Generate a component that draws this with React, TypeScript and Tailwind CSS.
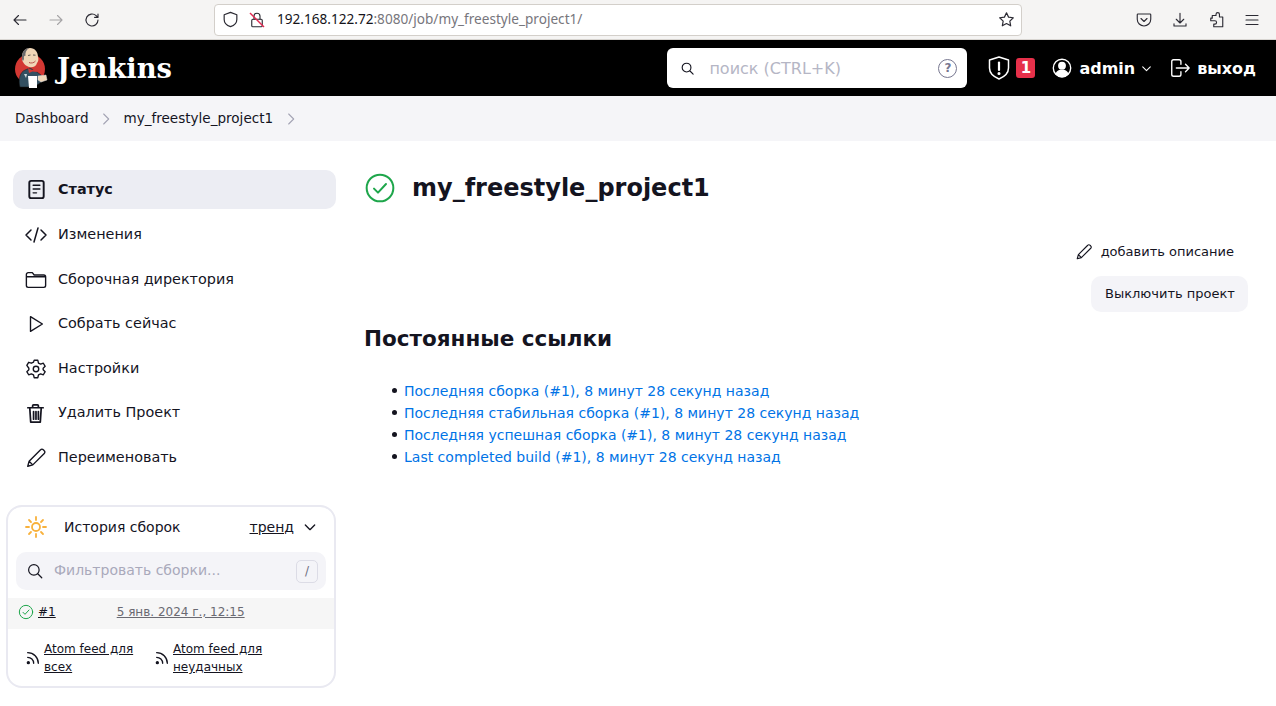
import React from "react";

const Stroke = ({ size = 20, sw = 1.5, className = "", children }: { size?: number; sw?: number; className?: string; children: React.ReactNode }) => (
  <svg width={size} height={size} viewBox="0 0 24 24" fill="none" stroke="currentColor" strokeWidth={sw} strokeLinecap="round" strokeLinejoin="round" className={className}>
    {children}
  </svg>
);

const Logo = () => (
  <svg width="40" height="48" viewBox="0 0 40 48">
    <circle cx="20" cy="25" r="15" fill="#d33833" />
    <path d="M10 43 C8 35 10 28 15 26 L20 24 L27 28 L31 31 L33 37 L27 41 L25 43 L12 43 Z" fill="#335061" stroke="#1b1b1b" strokeWidth=".5" />
    <path d="M12 13 C12 7 16 4 20 4 C25 4 28 8 28 13 C29 15 28 18 27 19 C26 23 22 24 19 23 C16 22 14 20 13 18 C12 17 12 15 12 13 Z" fill="#f0d6b7" />
    <path d="M12 13 C12 7 15 4.500 19 4 C16 6 15 9 15.500 12 C14.500 11.500 13.500 12 14 15 L13 17 C12 16 12 15 12 13 Z" fill="#6d6b6d" />
    <path d="M18 11.500 l2.500 -.5 M23 11 l2.500 .2" stroke="#3a3a3a" strokeWidth=".8" fill="none" />
    <path d="M19 18.500 C21 19.500 24 19 25.500 17" stroke="#a33" strokeWidth=".8" fill="none" />
    <path d="M18 24 L22 26 L26 24 L27 28 L22.500 27.500 L19 29 Z" fill="#d33833" />
    <path d="M18 32 L27 32 L27 44 L19 44 Z" fill="#fff" />
    <path d="M28 32 L36 31 L37 36 L31 38 L28 36 Z" fill="#f0d6b7" stroke="#ddd" strokeWidth=".5" />
    <path d="M14 30 L16 34 L17 30 Z" fill="#cfd8dc" />
  </svg>
);

const Row = ({ icon, label, active }: { icon: React.ReactNode; label: string; active?: boolean }) => (
  <div className={`flex items-center h-[39px] rounded-[10px] pl-[11px] text-[14.400px] ${active ? "bg-[#ecedf3] font-bold mb-[0.950px]" : ""}`}>
    <span className="w-[24px] h-[24px] flex items-center justify-center shrink-0">{icon}</span>
    <span className="ml-[10px]">{label}</span>
  </div>
);

const Rss = () => (
  <Stroke size={16} sw={2} className="shrink-0 text-[#14141f]">
    <path d="M4 11a9 9 0 0 1 9 9" />
    <path d="M4 4a16 16 0 0 1 16 16" />
    <circle cx="5" cy="19" r="1.500" fill="currentColor" />
  </Stroke>
);

const ChromeBtn = ({ children, className = "" }: { children: React.ReactNode; className?: string }) => (
  <span className={`flex items-center justify-center w-[20px] h-[20px] ${className}`}>{children}</span>
);

const links = [
  "Последняя сборка (#1), 8 минут 28 секунд назад",
  "Последняя стабильная сборка (#1), 8 минут 28 секунд назад",
  "Последняя успешная сборка (#1), 8 минут 28 секунд назад",
  "Last completed build (#1), 8 минут 28 секунд назад",
];

const Chevron = ({ className = "" }: { className?: string }) => (
  <Stroke size={16} sw={1.600} className={`text-[#a4a4b4] ${className}`}><path d="M8.500 4.500l7.500 7.500-7.500 7.500" /></Stroke>
);

export default function App() {
  return (
    <div className="w-[1276px] h-[706px] overflow-hidden bg-white text-[#14141f] text-[14px] font-['DejaVu_Sans',sans-serif]">
      {/* browser toolbar */}
      <div className="h-[40px] bg-[#f5f4f3] border-b border-[#d8d5d1] flex items-center text-[#2b2a33]">
        <div className="flex items-center gap-[16px] pl-[10px] w-[214px]">
          <ChromeBtn><Stroke size={18}><path d="M20 12H4M10 6l-6 6 6 6" /></Stroke></ChromeBtn>
          <ChromeBtn className="text-[#a5a4a6]"><Stroke size={18}><path d="M4 12h16M14 6l6 6-6 6" /></Stroke></ChromeBtn>
          <ChromeBtn><Stroke size={18}><path d="M20 12a8 8 0 1 1-2.500-5.800L20 8.500M20 4v4.500h-4.500" /></Stroke></ChromeBtn>
        </div>
        <div className="w-[808px] h-[32px] bg-white border border-[#d3cfca] rounded-[4px] flex items-center pl-[6px] pr-[5px] font-['Noto_Sans',sans-serif] text-[13.600px]">
          <Stroke size={19} className="text-[#2b2a33]"><path d="M12 3l8 3v6c0 4.500-3.200 7.500-8 9-4.800-1.500-8-4.500-8-9V6z" /></Stroke>
          <span className="relative ml-[8px] w-[18px] h-[18px]">
            <Stroke size={18}><rect x="5" y="11" width="14" height="10" rx="1.500" /><path d="M8 11V7a4 4 0 0 1 8 0v4" /></Stroke>
            <svg width="18" height="18" viewBox="0 0 18 18" className="absolute left-0 top-0"><path d="M2 2l14 14" stroke="#e22850" strokeWidth="1.500" /></svg>
          </span>
          <span className="ml-[11px] text-[#15141a]">192.168.122.72<span className="text-[#77767c]">:8080/job/my_freestyle_project1/</span></span>
          <span className="ml-auto flex">
            <Stroke size={19}><path d="M12 3.500l2.600 5.500 6 .8-4.400 4.200 1.100 6L12 17.100 6.700 20l1.100-6L3.400 9.800l6-.8z" /></Stroke>
          </span>
        </div>
        <div className="flex items-center ml-[112px] gap-[16px]">
          <ChromeBtn><Stroke size={18}><path d="M4 4h16a1 1 0 0 1 1 1v6a9 9 0 0 1-18 0V5a1 1 0 0 1 1-1z" /><path d="M8 10l4 4 4-4" /></Stroke></ChromeBtn>
          <ChromeBtn><Stroke size={18}><path d="M12 3v13M7 11l5 5 5-5M4 17v3h16v-3" /></Stroke></ChromeBtn>
          <ChromeBtn><Stroke size={18}><path d="M12 6V4.500a2.300 2.300 0 0 1 4.600 0V8H21v13H9v-3.500h1.500a2.200 2.200 0 0 0 0-4.500H5V9.500h2V6z" /></Stroke></ChromeBtn>
          <ChromeBtn><Stroke size={18}><path d="M4 6h16M4 12h16M4 18h16" /></Stroke></ChromeBtn>
        </div>
      </div>

      {/* jenkins header */}
      <div className="h-[56px] bg-black text-white flex items-center">
        <div className="ml-[10px] h-[48px]"><Logo /></div>
        <div className="ml-[7px] mt-[2px] font-['DejaVu_Serif',serif] font-bold text-[27.400px]">Jenkins</div>
        <div className="ml-auto w-[300px] h-[40px] bg-white rounded-[6px] flex items-center pl-[13px] pr-[10px] text-[#b5b6c5] text-[16px]">
          <Stroke size={15} sw={1.800} className="text-[#14141f]"><circle cx="10.500" cy="10.500" r="7" /><path d="M16 16l5 5" /></Stroke>
          <span className="ml-[14px] mt-[1px]">поиск (CTRL+K)</span>
          <span className="ml-auto w-[19px] h-[19px] rounded-full border-[1.500px] border-[#777790] text-[#777790] text-[12px] font-bold flex items-center justify-center">?</span>
        </div>
        <div className="ml-[20px] flex items-center">
          <Stroke size={24}><path d="M12 1l9.500 3v8c0 5-3.500 8.500-9.500 11-6-2.500-9.500-6-9.500-11V4z" /><path d="M12 6.500v7.500" strokeWidth="2.200" /><circle cx="12" cy="17.500" r=".8" fill="currentColor" /></Stroke>
          <span className="ml-[5px] w-[19px] h-[20px] rounded-[3px] bg-[#e6304a] text-white font-bold text-[15px] flex items-center justify-center">1</span>
        </div>
        <div className="ml-[16px] flex items-center font-bold text-[16px]">
          <Stroke size={22}><circle cx="12" cy="12" r="9.500" /><circle cx="12" cy="9.500" r="3.500" fill="currentColor" /><path d="M5.500 18.500c1.500-3 4-4 6.500-4s5 1 6.500 4A9.500 9.500 0 0 1 12 21.500a9.500 9.500 0 0 1-6.500-3z" fill="currentColor" /></Stroke>
          <span className="ml-[6px] mt-[1px]">admin</span>
          <Stroke size={13} sw={2} className="ml-[5px]"><path d="M5 9l7 7 7-7" /></Stroke>
        </div>
        <div className="ml-[16px] mr-[20px] flex items-center font-bold text-[16px]">
          <Stroke size={22}><path d="M13 8V5a2 2 0 0 0-2-2H5a2 2 0 0 0-2 2v14a2 2 0 0 0 2 2h6a2 2 0 0 0 2-2v-3" /><path d="M8 12h14M18 8l4 4-4 4" /></Stroke>
          <span className="ml-[6px] mt-[1px]">выход</span>
        </div>
      </div>

      {/* breadcrumbs */}
      <div className="h-[45px] bg-[#f5f5f8] flex items-center pl-[15px] text-[13.550px]">
        <span>Dashboard</span>
        <Chevron className="ml-[9px]" />
        <span className="ml-[10px]">my_freestyle_project1</span>
        <Chevron className="ml-[10px]" />
      </div>

      <div className="flex">
        {/* sidebar */}
        <div className="w-[365px] shrink-0 pt-[29px] pl-[6px]">
          <div className="ml-[7px] w-[323px] flex flex-col gap-[5.550px]">
            <Row active label="Статус" icon={<Stroke size={23}><rect x="4.500" y="3" width="15" height="18" rx="2" strokeWidth="2" /><path d="M8.500 7.500h7M8.500 11.500h7M8.500 15.500h3.500" /></Stroke>} />
            <Row label="Изменения" icon={<Stroke size={24}><path d="M7 7l-5 5 5 5M17 7l5 5-5 5M14 5l-4 14" /></Stroke>} />
            <Row label="Сборочная директория" icon={<Stroke size={22} className="-ml-[1px]"><path d="M1.500 6a2 2 0 0 1 2-2h4.500l2 2.500h10.500a2 2 0 0 1 2 2V18a2 2 0 0 1-2 2h-17a2 2 0 0 1-2-2zM1.500 8.500h21" /></Stroke>} />
            <Row label="Собрать сейчас" icon={<Stroke size={22}><path d="M6 4l13 8-13 8z" /></Stroke>} />
            <Row label="Настройки" icon={<Stroke size={22} className="-ml-[1px]"><circle cx="12" cy="12" r="3" /><path d="M10 2.500h4l.7 3 2.400 1.200 2.900-1 2 3.400-2.200 2.100v1.600l2.200 2.100-2 3.400-2.900-1-2.400 1.200-.7 3h-4l-.7-3-2.400-1.200-2.900 1-2-3.400 2.200-2.100v-1.600L2 8.100l2-3.400 2.900 1 2.400-1.200z" /></Stroke>} />
            <Row label="Удалить Проект" icon={<Stroke size={23} sw={1.800} className="-ml-[1px]"><path d="M4 6h16M9 6V4a1 1 0 0 1 1-1h4a1 1 0 0 1 1 1v2M6 6l1 15h10l1-15M10 10v8M12.500 10v8M15 10v8" /></Stroke>} />
            <Row label="Переименовать" icon={<Stroke size={22}><path d="M3 21l1.500-5.500L17 3a2 2 0 0 1 3 0l1 1a2 2 0 0 1 0 3L8.500 19.500zM4.500 15.500l4 4" /></Stroke>} />
          </div>

          {/* build history */}
          <div className="mt-[27.800px] w-[330px] h-[183px] border-2 border-[#e9e9f1] rounded-[16px] flex flex-col text-[13.500px]">
            <div className="flex items-center h-[40px] pl-[16px] pr-[16px]">
              <Stroke size={24} sw={1.800} className="text-[#f8b13c]"><circle cx="12" cy="12" r="4" /><path d="M12 2v3M12 19v3M2 12h3M19 12h3M5 5l2 2M17 17l2 2M5 19l2-2M17 7l2-2" /></Stroke>
              <span className="ml-[16px] text-[14px]">История сборок</span>
              <span className="ml-auto underline text-[14px]">тренд</span>
              <Stroke size={16} sw={2} className="ml-[8px]"><path d="M5 9l7 7 7-7" /></Stroke>
            </div>
            <div className="mx-[8px] mt-[5px] h-[38px] bg-[#f4f4f8] rounded-[10px] flex items-center pl-[10px] pr-[8px] text-[#a9a9bb]">
              <Stroke size={18} sw={1.600} className="text-[#14141f]"><circle cx="10.500" cy="10.500" r="7" /><path d="M16 16l5 5" /></Stroke>
              <span className="ml-[10px] mb-[2px] text-[14px]">Фильтровать сборки...</span>
              <span className="ml-auto w-[22px] h-[23px] rounded-[5px] border border-[#dcdce6] text-[#6e6e80] text-[12px] flex items-center justify-center">/</span>
            </div>
            <div className="mt-[8px] h-[31px] pb-[4px] bg-[#f6f6f6] flex items-center pl-[10px] text-[12px]">
              <Stroke size={16} className="text-[#1ea64b]"><circle cx="12" cy="12" r="10" /><path d="M7.500 12.500l3 3 6-6.500" /></Stroke>
              <span className="ml-[4px] underline">#1</span>
              <span className="ml-[61px] underline text-[#6a6a72]">5 янв. 2024 г., 12:15</span>
            </div>
            <div className="flex pl-[17px] pt-[11px] text-[12px] leading-[18px]">
              <div className="flex items-center w-[129px]"><Rss /><span className="ml-[3px] underline">Atom feed для<br />всех</span></div>
              <div className="flex items-center"><Rss /><span className="ml-[3px] underline">Atom feed для<br />неудачных</span></div>
            </div>
          </div>
        </div>

        {/* main */}
        <div className="flex-1 pr-[28px] pt-[29px]">
          <div className="flex items-center h-[36px]">
            <Stroke size={32} sw={1.500} className="text-[#1ea64b] -ml-[1px]"><circle cx="12" cy="12" r="10" /><path d="M7.500 12.500l3 3 6-6.500" /></Stroke>
            <h1 className="ml-[16px] text-[24px] font-bold">my_freestyle_project1</h1>
          </div>
          <div className="mt-[36px] flex flex-col items-end gap-[14px] text-[13px]">
            <div className="flex items-center mr-[14px]">
              <Stroke size={18}><path d="M3 21l1.500-5.500L17 3a2 2 0 0 1 3 0l1 1a2 2 0 0 1 0 3L8.500 19.500zM4.500 15.500l4 4" /></Stroke>
              <span className="ml-[8px]">добавить описание</span>
            </div>
            <div className="h-[36px] w-[157px] pl-[14px] bg-[#f4f4f8] rounded-[10px] flex items-center">Выключить проект</div>
          </div>
          <h2 className="mt-[11px] -ml-[1px] text-[21.500px] font-bold">Постоянные ссылки</h2>
          <ul className="mt-[25px] pl-[27px] text-[#0073e6] leading-[22px]">
            {links.map((l) => (
              <li key={l} className="flex items-center">
                <span className="w-[5px] h-[5px] rounded-full bg-[#14141f] mr-[7px] shrink-0" />
                {l}
              </li>
            ))}
          </ul>
        </div>
      </div>
    </div>
  );
}
